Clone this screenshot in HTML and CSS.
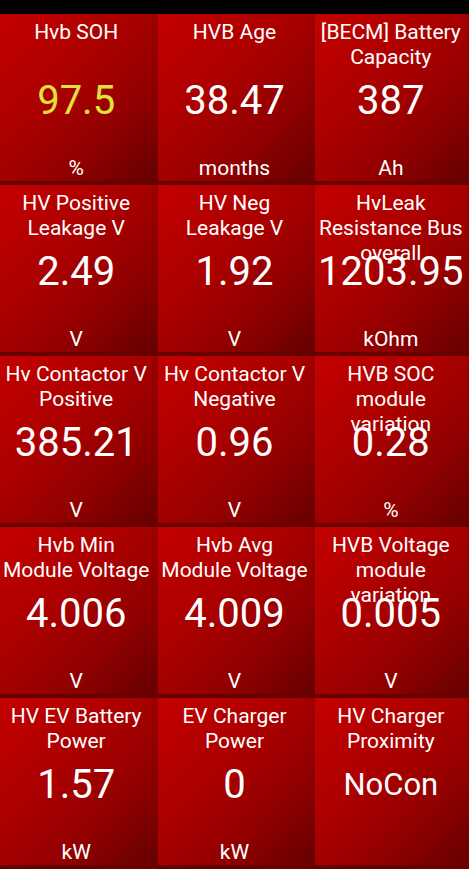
FILE: index.html
```html
<!DOCTYPE html>
<html>
<head>
<meta charset="utf-8">
<link rel="stylesheet" href="styles.css">
</head>
<body>
<div class="status"></div>
<div class="grid">
  <div class="cell"><div class="tile"><div class="title">Hvb SOH</div><div class="value yellow">97.5</div><div class="unit">%</div></div></div>
  <div class="cell"><div class="tile"><div class="title">HVB Age</div><div class="value">38.47</div><div class="unit">months</div></div></div>
  <div class="cell"><div class="tile"><div class="title">[BECM] Battery Capacity</div><div class="value">387</div><div class="unit">Ah</div></div></div>

  <div class="cell"><div class="tile"><div class="title">HV Positive Leakage V</div><div class="value">2.49</div><div class="unit">V</div></div></div>
  <div class="cell"><div class="tile"><div class="title">HV Neg Leakage V</div><div class="value">1.92</div><div class="unit">V</div></div></div>
  <div class="cell"><div class="tile"><div class="title">HvLeak Resistance Bus overall</div><div class="value">1203.95</div><div class="unit">kOhm</div></div></div>

  <div class="cell"><div class="tile"><div class="title">Hv Contactor V Positive</div><div class="value">385.21</div><div class="unit">V</div></div></div>
  <div class="cell"><div class="tile"><div class="title">Hv Contactor V Negative</div><div class="value">0.96</div><div class="unit">V</div></div></div>
  <div class="cell"><div class="tile"><div class="title">HVB SOC module variation</div><div class="value">0.28</div><div class="unit">%</div></div></div>

  <div class="cell"><div class="tile"><div class="title">Hvb Min Module Voltage</div><div class="value">4.006</div><div class="unit">V</div></div></div>
  <div class="cell"><div class="tile"><div class="title">Hvb Avg Module Voltage</div><div class="value">4.009</div><div class="unit">V</div></div></div>
  <div class="cell"><div class="tile"><div class="title">HVB Voltage module variation</div><div class="value">0.005</div><div class="unit">V</div></div></div>

  <div class="cell"><div class="tile"><div class="title">HV EV Battery Power</div><div class="value">1.57</div><div class="unit">kW</div></div></div>
  <div class="cell"><div class="tile"><div class="title">EV Charger Power</div><div class="value">0</div><div class="unit">kW</div></div></div>
  <div class="cell"><div class="tile"><div class="title">HV Charger Proximity</div><div class="value small">NoCon</div><div class="unit"></div></div></div>
</div>
</body>
</html>
```
FILE: styles.css
```css
html, body {
  margin: 0;
  padding: 0;
  background: #000;
  width: 469px;
  height: 869px;
  overflow: hidden;
  font-family: Roboto, "Noto Sans", "Liberation Sans", sans-serif;
}
.status {
  height: 14px;
  background: #000;
}
.grid {
  display: grid;
  grid-template-columns: repeat(3, 1fr);
  grid-auto-rows: 171px;
  background: #7a0000;
}
.cell {
  padding: 0 2px 4px 2px;
  background: linear-gradient(180deg, #9c0000 0%, #850000 60%, #680000 100%);
}
.cell:nth-child(3n+1) {
  padding-left: 0;
  padding-right: 4px;
}
.tile {
  height: 100%;
  box-sizing: border-box;
  display: flex;
  flex-direction: column;
  align-items: center;
  color: #fff;
  text-align: center;
  padding-top: 6px;
  background: linear-gradient(135deg, #c40000 0%, #ac0000 40%, #920000 70%, #660000 100%);
}
.title {
  height: 57px;
  flex: none;
  font-size: 21px;
  line-height: 25px;
  padding: 0 1px;
}
.value {
  height: 48px;
  flex: none;
  font-size: 40px;
  line-height: 48px;
  white-space: nowrap;
}
.value.yellow {
  color: #e2e03c;
}
.value.small {
  font-size: 31px;
}
.unit {
  margin-top: auto;
  height: 25px;
  font-size: 21px;
  line-height: 25px;
}
```
